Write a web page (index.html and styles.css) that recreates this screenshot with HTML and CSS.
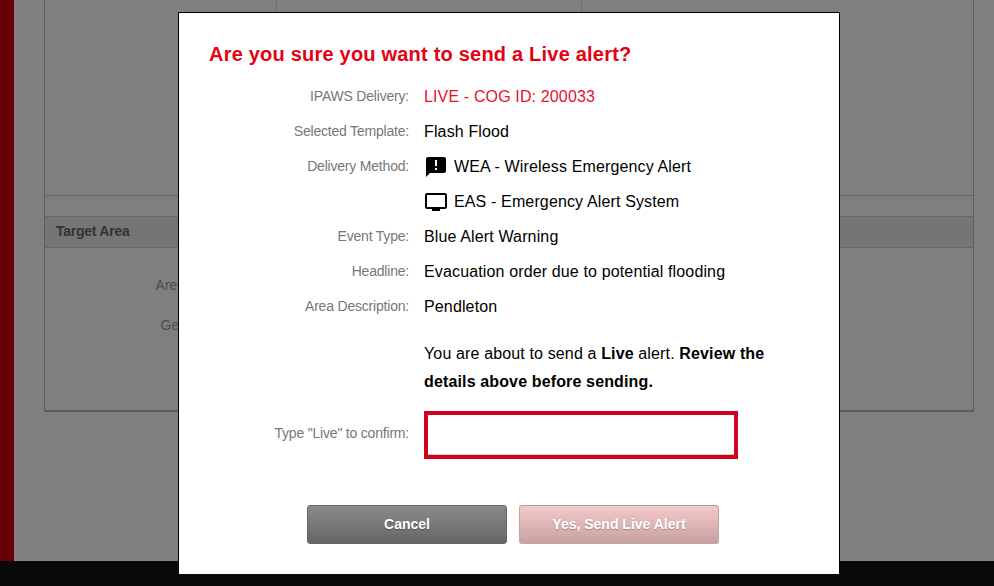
FILE: index.html
```html
<!DOCTYPE html>
<html lang="en">
  <head>
    <meta charset="UTF-8" />
    <meta name="viewport" content="width=device-width, initial-scale=1.0" />
    <title>Send Alert</title>
    <link rel="stylesheet" href="styles.css">
  </head>
  <body>
    <div class="page">
      <div class="main">
        <div class="sidebar"></div>
        <div class="content">
          <div class="panel">
            <div class="columns">
              <div class="col col-first"></div>
              <div class="col col-second"></div>
              <div class="col"></div>
            </div>
            <div class="spacer-row"></div>
            <div class="section-head">Target Area</div>
            <div class="section-body">
              <div class="area-label">Area Description:</div>
              <div class="area-label">Geocode Values</div>
            </div>
          </div>
        </div>
      </div>
      <div class="footer"></div>
    </div>

    <div class="overlay"></div>

    <div class="modal">
      <h1 class="modal-title">Are you sure you want to send a Live alert?</h1>

      <div class="row">
        <div class="label">IPAWS Delivery:</div>
        <div class="value value-live">LIVE - COG ID: 200033</div>
      </div>
      <div class="row">
        <div class="label">Selected Template:</div>
        <div class="value">Flash Flood</div>
      </div>
      <div class="row">
        <div class="label">Delivery Method:</div>
        <div class="value">
          <svg class="icon" viewBox="0 0 24 24"><path d="M20 2H4c-1.1 0-1.99.9-1.99 2L2 22l4-4h14c1.1 0 2-.9 2-2V4c0-1.1-.9-2-2-2zm-7 9h-2V5h2v6zm0 4h-2v-2h2v2z"/></svg>
          WEA - Wireless Emergency Alert
        </div>
      </div>
      <div class="row">
        <div class="label"></div>
        <div class="value">
          <svg class="icon" viewBox="0 0 24 24"><path d="M21 3H3c-1.1 0-2 .9-2 2v12c0 1.1.9 2 2 2h5v2h8v-2h5c1.1 0 1.99-.9 1.99-2L23 5c0-1.1-.9-2-2-2zm0 14H3V5h18v12z"/></svg>
          EAS - Emergency Alert System
        </div>
      </div>
      <div class="row">
        <div class="label">Event Type:</div>
        <div class="value">Blue Alert Warning</div>
      </div>
      <div class="row">
        <div class="label">Headline:</div>
        <div class="value">Evacuation order due to potential flooding</div>
      </div>
      <div class="row">
        <div class="label">Area Description:</div>
        <div class="value">Pendleton</div>
      </div>

      <div class="notice">
        <div>You are about to send a <b>Live</b> alert. <b>Review the</b></div>
        <div><b>details above before sending.</b></div>
      </div>

      <div class="confirm-row">
        <label class="label" for="confirmInput">Type "Live" to confirm:</label>
        <input type="text" id="confirmInput" class="confirm-input" value="" />
      </div>

      <div class="actions">
        <button class="btn btn-cancel">Cancel</button>
        <button class="btn btn-send">Yes, Send Live Alert</button>
      </div>
    </div>
  </body>
</html>
```

FILE: styles.css
```css
html, body {
  margin: 0;
  height: 586px;
  overflow: hidden;
}
body {
  font-family: "Liberation Sans", Arial, sans-serif;
  background-color: #fff;
}

/* page behind the dialog */
.page {
  display: flex;
  flex-direction: column;
  height: 586px;
}
.main {
  display: flex;
  flex: 1;
}
.sidebar {
  width: 14px;
  background-color: #d4000e;
}
.content {
  flex: 1;
  padding: 0 20px 0 30px;
}
.panel {
  box-sizing: border-box;
  height: 412px;
  border: 1px solid #bbb;
  border-top: none;
  border-bottom-width: 2px;
}
.columns {
  display: flex;
  height: 195px;
  border-bottom: 1px solid #ccc;
}
.col {
  flex: 1;
}
.col-first {
  flex: none;
  width: 231px;
  border-right: 1px solid #ddd;
}
.col-second {
  flex: none;
  width: 304px;
  border-right: 1px solid #ddd;
}
.spacer-row {
  height: 20px;
  border-bottom: 1px solid #ccc;
}
.section-head {
  height: 30px;
  line-height: 28px;
  padding-left: 11px;
  font-size: 14px;
  font-weight: bold;
  letter-spacing: -0.25px;
  color: #666;
  background-color: #ebebeb;
  border-bottom: 1px solid #ccc;
}
.section-body {
  padding-top: 17px;
}
.area-label {
  width: 218px;
  height: 40px;
  line-height: 40px;
  text-align: right;
  font-size: 14px;
  color: #999;
}
.footer {
  height: 25px;
  background-color: #141414;
}
.overlay {
  position: absolute;
  top: 0;
  left: 0;
  right: 0;
  bottom: 0;
  background-color: rgba(0, 0, 0, 0.5);
}

/* dialog */
.modal {
  position: absolute;
  top: 12px;
  left: 178px;
  width: 600px;
  height: 531px;
  padding: 30px 30px 0 30px;
  background-color: #fff;
  border: 1px solid #000;
  border-bottom: none;
}
.modal-title {
  margin: 0 0 13px 0;
  font-size: 20px;
  line-height: 23px;
  font-weight: bold;
  letter-spacing: 0.21px;
  color: #e60012;
}
.row {
  display: flex;
  align-items: center;
  height: 35px;
}
.label {
  flex: none;
  width: 200px;
  padding-bottom: 2px;
  text-align: right;
  font-size: 14px;
  letter-spacing: -0.2px;
  color: #777;
}
.value {
  display: flex;
  align-items: center;
  gap: 6px;
  margin-left: 15px;
  font-size: 16px;
  letter-spacing: 0.14px;
  color: #000;
}
.value-live {
  color: #e8112d;
}
.icon {
  width: 24px;
  height: 24px;
  fill: #000;
}
.notice {
  margin: 16px 0 15px 215px;
  font-size: 16px;
  line-height: 28px;
  letter-spacing: 0.14px;
  color: #000;
}
.confirm-row {
  display: flex;
  align-items: center;
}
.confirm-row .label {
  padding-bottom: 4px;
}
.confirm-input {
  box-sizing: border-box;
  width: 314px;
  height: 48px;
  margin-left: 15px;
  border: 4px solid #d0021b;
  border-radius: 0;
  outline: none;
  box-shadow: inset 0 -1px 0 #ccc;
}
.actions {
  display: flex;
  gap: 12px;
  margin: 46px 0 0 98px;
}
.btn {
  box-sizing: border-box;
  width: 200px;
  height: 39px;
  padding: 0 0 2px 0;
  border-radius: 3px;
  font-family: inherit;
  font-size: 14px;
  font-weight: bold;
  color: #fff;
  cursor: pointer;
}
.btn-cancel {
  background: linear-gradient(#8a8a8a, #666);
  border: 1px solid #666;
  text-shadow: 0 1px 1px rgba(0, 0, 0, 0.3);
}
.btn-send {
  background: linear-gradient(#f4c9c9, #c8a1a1);
  border: 1px solid #c4a6a6;
  border-top-color: #b39a9a;
  text-shadow: 0 1px 1px rgba(0, 0, 0, 0.25);
}
```
